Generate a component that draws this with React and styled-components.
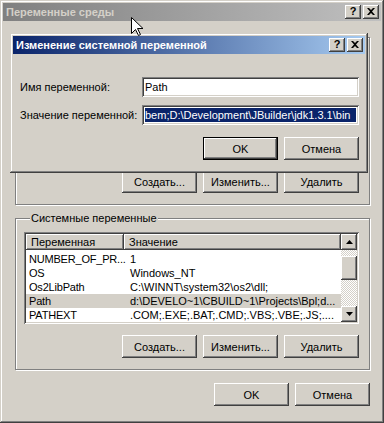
import React from 'react';
import styled, { createGlobalStyle } from 'styled-components';

const GlobalStyle = createGlobalStyle`
  html, body {
    margin: 0;
    padding: 0;
    background: #d4d0c8;
  }
  body {
    font-family: "Liberation Sans", Arial, sans-serif;
    font-size: 11px;
    color: #000;
  }
`;

const raised = `
  box-shadow: inset -1px -1px #404040, inset 1px 1px #fff,
    inset -2px -2px #808080, inset 2px 2px #d4d0c8;
`;

const sunken = `
  box-shadow: inset 1px 1px #808080, inset -1px -1px #fff,
    inset 2px 2px #404040, inset -2px -2px #d4d0c8;
`;

const Desktop = styled.div`
  position: relative;
  width: 384px;
  height: 423px;
  overflow: hidden;
`;

const Frame = styled.div`
  box-sizing: border-box;
  background: #d4d0c8;
  padding: 3px;
  display: flex;
  flex-direction: column;
  box-shadow: inset -1px -1px #404040, inset 1px 1px #d4d0c8,
    inset -2px -2px #808080, inset 2px 2px #fff;
`;

const MainWindow = styled(Frame)`
  width: 384px;
  height: 423px;
`;

const Dialog = styled(Frame)`
  position: absolute;
  left: 10px;
  top: 33px;
  width: 358px;
  height: 140px;
`;

const TitleBar = styled.div`
  height: 18px;
  display: flex;
  align-items: center;
  padding: 0 2px 0 3px;
  background: ${p => p.$active
    ? 'linear-gradient(to right, #0a246a, #a6caf0)'
    : 'linear-gradient(to right, #808080, #c0c0c0)'};
  color: ${p => (p.$active ? '#fff' : '#d4d0c8')};
  font-weight: bold;
  font-size: 11px;
`;

const TitleText = styled.span`
  flex: 1;
  white-space: nowrap;
  overflow: hidden;
`;

const CaptionButtons = styled.div`
  display: flex;
  gap: 2px;
`;

const CaptionButton = styled.div`
  width: 16px;
  height: 14px;
  box-sizing: border-box;
  background: #d4d0c8;
  ${raised}
  display: flex;
  align-items: center;
  justify-content: center;
  color: #000;
  font-weight: bold;
  font-size: 11px;
  line-height: 1;
  padding-bottom: 1px;
`;

const Content = styled.div`
  flex: 1;
  display: flex;
  flex-direction: column;
  padding: 16px 11px 0 12px;
`;

const Group = styled.fieldset`
  margin: ${p => p.$top}px 0 0 0;
  padding: 7px 10px 11px 8px;
  border: 1px solid #808080;
  box-shadow: inset 1px 1px #fff, 1px 1px #fff;
  min-width: 0;
  display: flex;
  flex-direction: column;
`;

const Legend = styled.legend`
  margin-left: 6px;
  padding: 0 1px;
  line-height: 13px;
  background: #d4d0c8;
  position: relative;
`;

const ButtonRow = styled.div`
  display: flex;
  justify-content: flex-end;
  gap: 6px;
  margin-top: ${p => p.$top || 0}px;
`;

const Button = styled.div`
  width: 75px;
  height: 23px;
  box-sizing: border-box;
  background: #d4d0c8;
  display: flex;
  align-items: center;
  justify-content: center;
  ${p => p.$default
    ? `box-shadow: inset 0 0 0 1px #000, inset -2px -2px #404040, inset 2px 2px #fff,
        inset -3px -3px #808080, inset 3px 3px #d4d0c8;`
    : raised}
`;

const HiddenList = styled.div`
  height: 114px;
  background: #fff;
  ${sunken}
`;

const ListView = styled.div`
  height: 92px;
  box-sizing: border-box;
  padding: 2px;
  background: #fff;
  ${sunken}
  display: flex;
`;

const ListMain = styled.div`
  flex: 1;
  display: flex;
  flex-direction: column;
  overflow: hidden;
`;

const HeaderRow = styled.div`
  display: flex;
  height: 16px;
  flex-shrink: 0;
`;

const HeaderCell = styled.div`
  width: ${p => p.$w}px;
  flex: ${p => (p.$w ? 'none' : '1')};
  box-sizing: border-box;
  background: #d4d0c8;
  ${raised}
  padding: 0 0 0 5px;
  display: flex;
  align-items: center;
  white-space: nowrap;
`;

const Rows = styled.div`
  padding-top: 2px;
`;

const Row = styled.div`
  display: flex;
  height: 14px;
  align-items: center;
  background: ${p => (p.$selected ? '#d4d0c8' : 'transparent')};
  white-space: nowrap;
`;

const Cell = styled.div`
  width: ${p => p.$w}px;
  flex: ${p => (p.$w ? 'none' : '1')};
  padding-left: ${p => p.$pad}px;
  box-sizing: border-box;
  overflow: ${p => (p.$w ? 'visible' : 'hidden')};
  letter-spacing: ${p => (p.$w ? '-0.2px' : '0')};
`;

const ScrollBar = styled.div`
  width: 16px;
  display: flex;
  flex-direction: column;
`;

const ScrollArrow = styled.div`
  width: 16px;
  height: 16px;
  box-sizing: border-box;
  background: #d4d0c8;
  ${raised}
  display: flex;
  align-items: center;
  justify-content: center;
`;

const Track = styled.div`
  flex: 1;
  background-color: #fff;
  background-image: repeating-conic-gradient(#d4d0c8 0 25%, #fff 0 50%);
  background-size: 2px 2px;
  padding-top: 6px;
`;

const Thumb = styled.div`
  height: 24px;
  background: #d4d0c8;
  ${raised}
`;

const DialogBody = styled.div`
  flex: 1;
  display: flex;
  flex-direction: column;
  padding: 23px 6px 0 7px;
`;

const FieldRow = styled.div`
  display: flex;
  align-items: center;
  height: 20px;
  margin-bottom: 8px;
`;

const Label = styled.div`
  width: 122px;
  flex-shrink: 0;
  white-space: nowrap;
`;

const TextBox = styled.div`
  flex: 1;
  height: 20px;
  box-sizing: border-box;
  background: #fff;
  ${sunken}
  padding: 3px;
  display: flex;
  align-items: center;
  overflow: hidden;
  white-space: nowrap;
`;

const Selected = styled.span`
  flex: 1;
  background: #0a246a;
  color: #fff;
  line-height: 14px;
  overflow: hidden;
`;

const Cursor = styled.svg`
  position: absolute;
  left: 131px;
  top: 17px;
`;

const CloseGlyph = () => (
  <svg width="8" height="7" viewBox="0 0 8 7">
    <path d="M0 0h2l2 2 2-2h2L5 3.5 8 7H6L4 5 2 7H0l3-3.5z" fill="#000" />
  </svg>
);

const Arrow = ({ down }) => (
  <svg width="7" height="4" viewBox="0 0 7 4">
    <path d={down ? 'M0 0h7L3.5 4z' : 'M0 4h7L3.5 0z'} fill="#000" />
  </svg>
);

const rows = [
  ['NUMBER_OF_PR...', '1'],
  ['OS', 'Windows_NT'],
  ['Os2LibPath', 'C:\\WINNT\\system32\\os2\\dll;'],
  ['Path', 'd:\\DEVELO~1\\CBUILD~1\\Projects\\Bpl;d...'],
  ['PATHEXT', '.COM;.EXE;.BAT;.CMD;.VBS;.VBE;.JS;....'],
];

const Caption = ({ title, active }) => (
  <TitleBar $active={active}>
    <TitleText>{title}</TitleText>
    <CaptionButtons>
      <CaptionButton>?</CaptionButton>
      <CaptionButton><CloseGlyph /></CaptionButton>
    </CaptionButtons>
  </TitleBar>
);

export default function App() {
  return (
    <Desktop>
      <GlobalStyle />
      <MainWindow>
        <Caption title="Переменные среды" />
        <Content>
          <Group $top={0}>
            <HiddenList />
            <ButtonRow $top={11}>
              <Button>Создать...</Button>
              <Button>Изменить...</Button>
              <Button>Удалить</Button>
            </ButtonRow>
          </Group>
          <Group $top={7}>
            <Legend>Системные переменные</Legend>
            <ListView>
              <ListMain>
                <HeaderRow>
                  <HeaderCell $w={98}>Переменная</HeaderCell>
                  <HeaderCell>Значение</HeaderCell>
                </HeaderRow>
                <Rows>
                  {rows.map(([name, value]) => (
                    <Row key={name} $selected={name === 'Path'}>
                      <Cell $w={98} $pad={3}>{name}</Cell>
                      <Cell $pad={6}>{value}</Cell>
                    </Row>
                  ))}
                </Rows>
              </ListMain>
              <ScrollBar>
                <ScrollArrow><Arrow /></ScrollArrow>
                <Track><Thumb /></Track>
                <ScrollArrow><Arrow down /></ScrollArrow>
              </ScrollBar>
            </ListView>
            <ButtonRow $top={11}>
              <Button>Создать...</Button>
              <Button>Изменить...</Button>
              <Button>Удалить</Button>
            </ButtonRow>
          </Group>
          <ButtonRow $top={13}>
            <Button>OK</Button>
            <Button>Отмена</Button>
          </ButtonRow>
        </Content>
      </MainWindow>

      <Dialog>
        <Caption title="Изменение системной переменной" active />
        <DialogBody>
          <FieldRow>
            <Label>Имя переменной:</Label>
            <TextBox>Path</TextBox>
          </FieldRow>
          <FieldRow>
            <Label>Значение переменной:</Label>
            <TextBox>
              <Selected>bem;D:\Development\JBuilder\jdk1.3.1\bin</Selected>
            </TextBox>
          </FieldRow>
          <ButtonRow $top={4}>
            <Button $default>OK</Button>
            <Button>Отмена</Button>
          </ButtonRow>
        </DialogBody>
      </Dialog>

      <Cursor width="12" height="19" viewBox="0 0 12 19">
        <path d="M0.5 0.5v16l4-4 3 6 2-1-3-6h5.5z" fill="#fff" stroke="#000" strokeWidth="1" />
      </Cursor>
    </Desktop>
  );
}
